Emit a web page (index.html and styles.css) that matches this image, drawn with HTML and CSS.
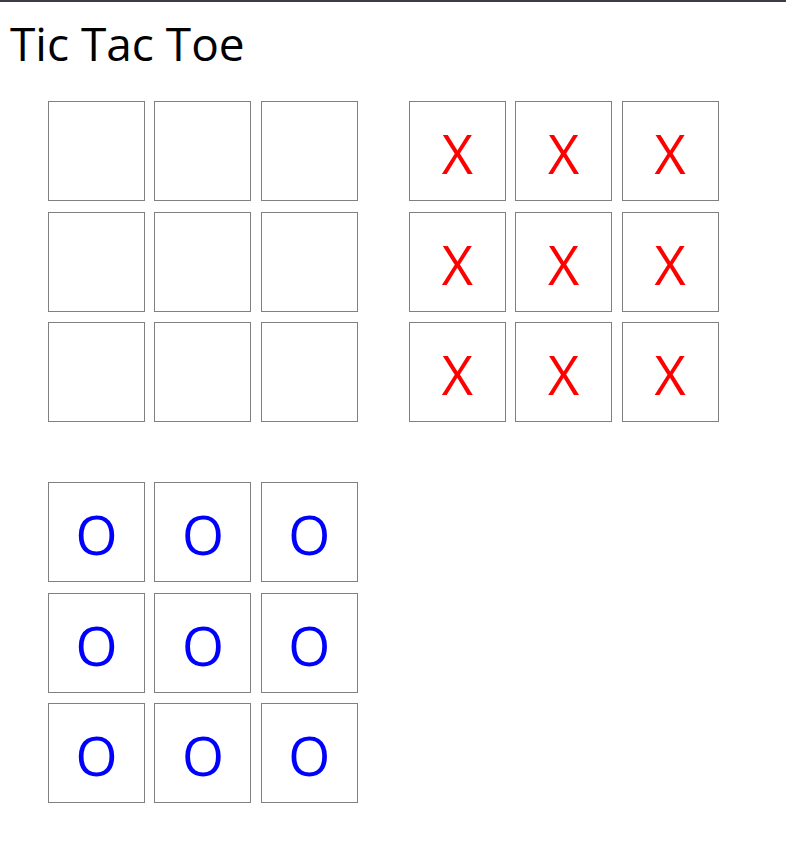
FILE: index.html
```html
<!DOCTYPE html>
<html lang="en">
<head>
<meta charset="utf-8">
<title>Tic Tac Toe</title>
<link rel="stylesheet" href="styles.css">
</head>
<body>
<div class="topbar"></div>
<main class="page">
  <h1 class="title">Tic Tac Toe</h1>
  <div class="boards">
    <div class="board">
      <div class="cell"></div><div class="cell"></div><div class="cell"></div>
      <div class="cell"></div><div class="cell"></div><div class="cell"></div>
      <div class="cell"></div><div class="cell"></div><div class="cell"></div>
    </div>
    <div class="board">
      <div class="cell x">X</div><div class="cell x">X</div><div class="cell x">X</div>
      <div class="cell x">X</div><div class="cell x">X</div><div class="cell x">X</div>
      <div class="cell x">X</div><div class="cell x">X</div><div class="cell x">X</div>
    </div>
    <div class="board">
      <div class="cell o">O</div><div class="cell o">O</div><div class="cell o">O</div>
      <div class="cell o">O</div><div class="cell o">O</div><div class="cell o">O</div>
      <div class="cell o">O</div><div class="cell o">O</div><div class="cell o">O</div>
    </div>
  </div>
</main>
</body>
</html>
```
FILE: styles.css
```css
html, body {
  margin: 0;
  padding: 0;
  background: #ffffff;
}
body {
  font-family: "Open Sans", "Noto Sans", sans-serif;
}
.topbar {
  height: 2px;
  background: #3c3c46;
}
.page {
  padding: 0 8px;
}
.title {
  margin: 0;
  padding: 12px 0 0 2px;
  font-size: 46px;
  font-weight: 400;
  line-height: 58px;
  color: #000;
}
.boards {
  display: flex;
  flex-wrap: wrap;
  width: 712px;
  padding-left: 40px;
  padding-top: 29px;
  column-gap: 51px;
  row-gap: 60px;
}
.board {
  display: grid;
  grid-template-columns: repeat(3, 97px);
  grid-auto-rows: 100px;
  column-gap: 9.4px;
  row-gap: 10.5px;
}
.cell {
  box-sizing: border-box;
  border: 1px solid #808080;
  display: flex;
  align-items: center;
  justify-content: center;
  font-size: 54px;
  line-height: 1;
  padding-top: 4px;
}
.x { color: #ff0000; }
.o { color: #0000ff; }
```
